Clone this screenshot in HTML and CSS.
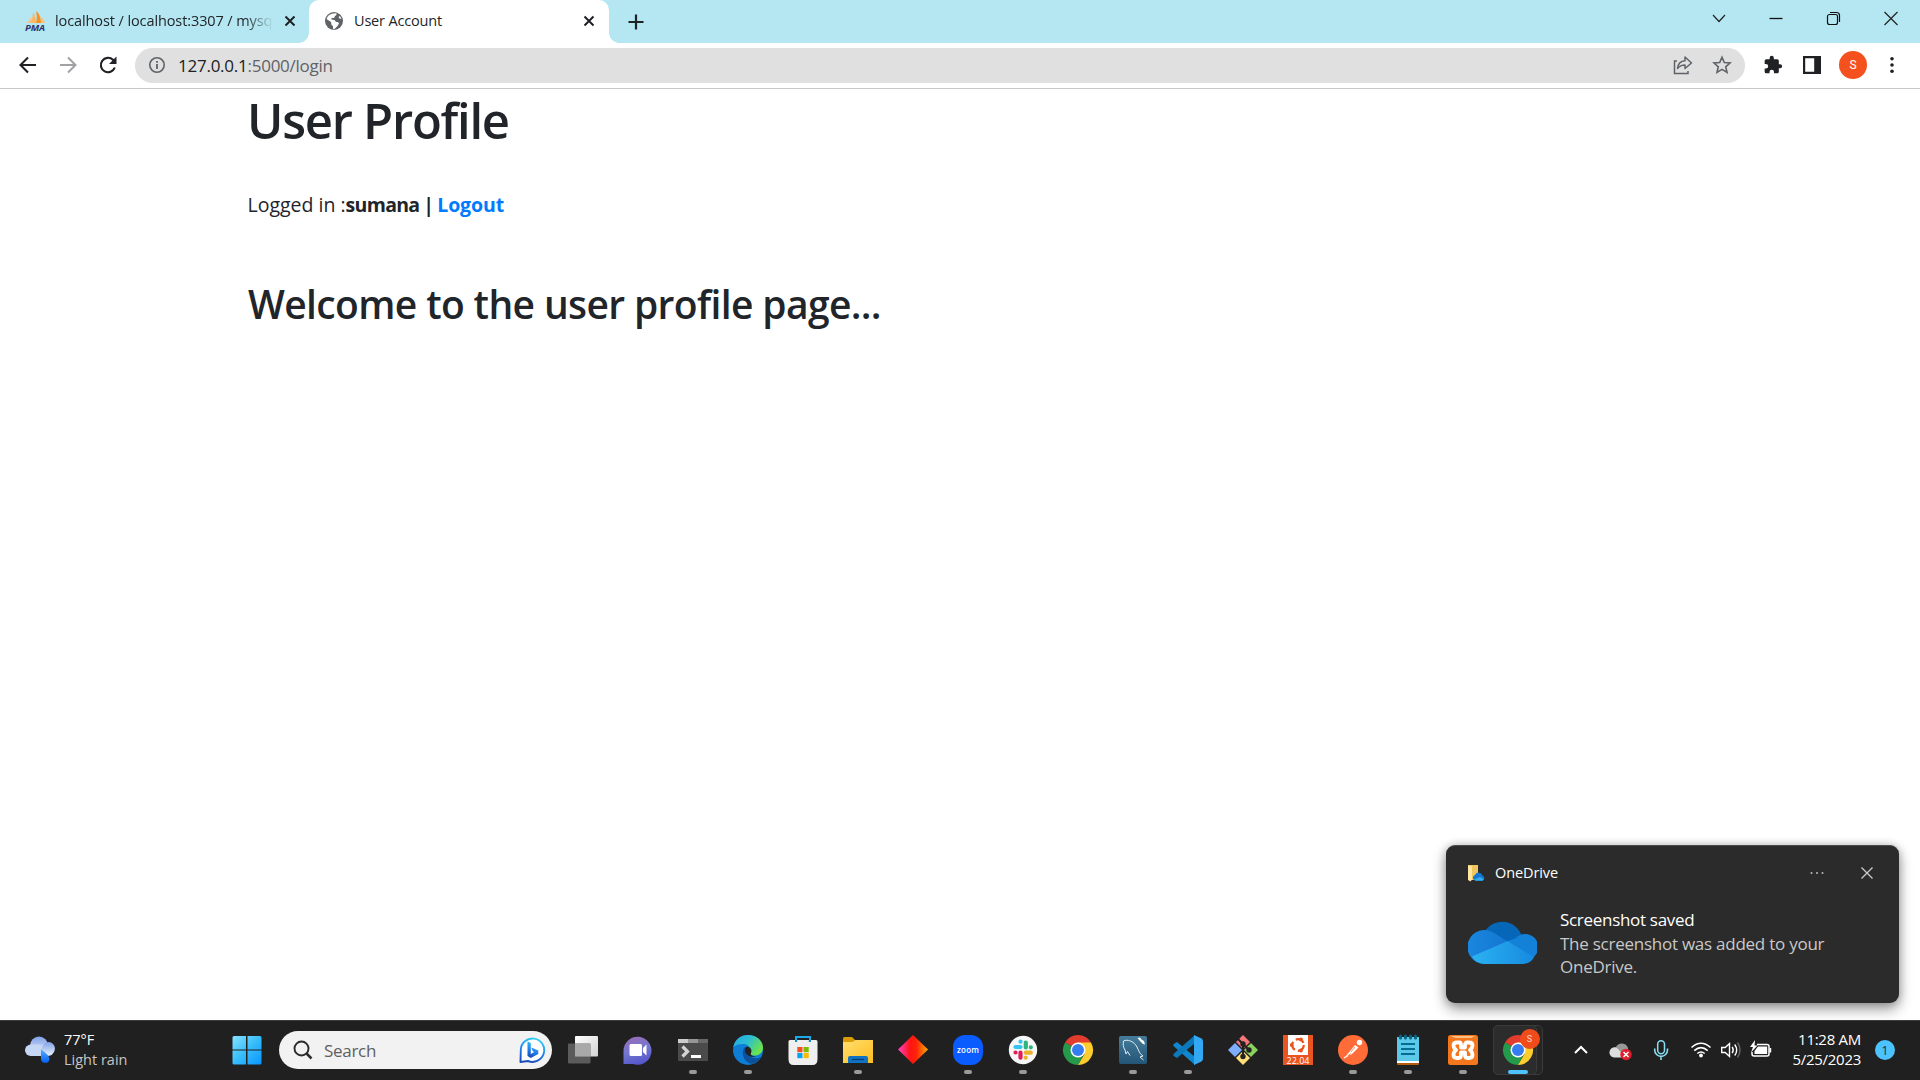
FILE: index.html
```html
<!DOCTYPE html>
<html lang="en">
<head>
<meta charset="utf-8">
<title>User Account</title>
<link rel="stylesheet" href="styles.css">
</head>
<body>
<div class="desktop">
  <header class="tabstrip">
    <div class="tab">
      <svg class="pma" width="24" height="22" viewBox="0 0 24 22"><path d="M6 13C8 10 9 6 9 2c2 3 3 7 3 11z" fill="#fbb667"/><path d="M12 13c1-4 1-8 0-12 4 3 5 8 5 12z" fill="#f8921e"/><path d="M17 13c0-3 0-5-1-7 3 2 4 4 5 7zM2 13c2-1 4-3 5-6 0 3 0 4-1 6z" fill="#fcc183"/><text x="1" y="20.500" class="pma-text" textLength="20" lengthAdjust="spacingAndGlyphs">PMA</text></svg>
      <span class="tab-title first">localhost / localhost:3307 / mysq</span>
      <svg class="close" width="12" height="12" viewBox="0 0 12 12"><path d="M1.500 1.500l9 9M10.500 1.500l-9 9" stroke="#202124" stroke-width="2"/></svg>
    </div>
    <div class="tab active">
      <svg width="20" height="20" viewBox="0 0 20 20"><circle cx="10" cy="10" r="9" fill="#5f6368"/><path d="M9 2.500l3.500-.3c0 1.500 0 2.300-1.500 2.800l-1 2H7.500v1.500l3 .5 1.500 2h2l1 1.500-1.500 2.500-3.500 3.500-1-1v-2.500l-1.500-1L7 11 2.500 8C3.500 5 5.500 3 9 2.500zM16 5l1.500 3-2-.5-1-1.500z" fill="#fff"/></svg>
      <span class="tab-title">User Account</span>
      <svg class="close" width="12" height="12" viewBox="0 0 12 12"><path d="M1.500 1.500l9 9M10.500 1.500l-9 9" stroke="#202124" stroke-width="2"/></svg>
    </div>
    <svg class="plus" width="16" height="16" viewBox="0 0 16 16"><path d="M8 .5v15M.5 8h15" stroke="#202124" stroke-width="2.200"/></svg>
    <div class="window-controls">
      <svg width="56" height="20" viewBox="0 0 56 20"><path d="M22 7l6 6.500L34 7" fill="none" stroke="#222" stroke-width="1.200"/></svg>
      <svg width="58" height="20" viewBox="0 0 58 20"><path d="M22.500 10.500h13" stroke="#111" stroke-width="1.300"/></svg>
      <svg width="57" height="20" viewBox="0 0 57 20"><rect x="22.500" y="6.500" width="10" height="10" rx="2" fill="none" stroke="#111" stroke-width="1.200"/><path d="M25 4.500h6.500q3 0 3 3V14" fill="none" stroke="#111" stroke-width="1.200"/></svg>
      <svg width="58" height="20" viewBox="0 0 58 20"><path d="M22.500 4l13 13M35.500 4l-13 13" stroke="#222" stroke-width="1.200"/></svg>
    </div>
  </header>

  <nav class="toolbar">
    <div class="nav-buttons">
      <svg width="40" height="24" viewBox="0 0 40 24"><path d="M28 12H13M20 4.500L12.500 12l7.500 7.500" fill="none" stroke="#202124" stroke-width="2.100"/></svg>
      <svg width="40" height="24" viewBox="0 0 40 24"><path d="M12 12h15M20 4.500l7.500 7.500-7.500 7.500" fill="none" stroke="#a0a1a4" stroke-width="2"/></svg>
      <svg width="40" height="24" viewBox="0 0 40 24"><path d="M26.800 14.500A7.200 7.200 0 1 1 25 6.800l1.800 2" fill="none" stroke="#202124" stroke-width="2.100"/><path d="M28.500 3.500v7.500H21z" fill="#202124"/></svg>
    </div>
    <div class="omnibox">
      <svg width="18" height="18" viewBox="0 0 18 18"><circle cx="9" cy="9" r="7.200" fill="none" stroke="#5f6368" stroke-width="1.600"/><path d="M9 8v5M9 5v1.700" stroke="#5f6368" stroke-width="1.800"/></svg>
      <span class="url"><b>127.0.0.1</b>:5000/login</span>
      <svg class="share" width="22" height="22" viewBox="0 0 22 22"><path d="M5 7H2.500v12.500H16V17" fill="none" stroke="#5f6368" stroke-width="1.500"/><path d="M5.500 14.500c.5-4.500 3-7.500 7.500-7.800V3l6.500 6-6.500 5.500V11c-3.500 0-5.500 1-7.500 3.500z" fill="none" stroke="#5f6368" stroke-width="1.500" stroke-linejoin="round"/></svg>
      <svg width="20" height="20" viewBox="0 0 20 20"><path d="M10 2.300l2.300 5.200 5.700.5-4.300 3.800 1.300 5.600-5-3-5 3 1.300-5.600L2 8l5.700-.5z" fill="none" stroke="#5f6368" stroke-width="1.600"/></svg>
    </div>
    <div class="actions">
      <svg width="20" height="20" viewBox="0 0 24 24"><path d="M20.500 11H19V7a2 2 0 0 0-2-2h-4V3.500a2.500 2.500 0 0 0-5 0V5H4a2 2 0 0 0-2 2v3.800h1.500a2.700 2.700 0 0 1 0 5.400H2V20a2 2 0 0 0 2 2h3.800v-1.500a2.700 2.700 0 0 1 5.400 0V22H17a2 2 0 0 0 2-2v-4h1.500a2.500 2.500 0 0 0 0-5z" fill="#202124"/></svg>
      <svg width="18" height="18" viewBox="0 0 18 18"><path d="M0 0h18v18H0zM2.200 2.200v13.600h9V2.200z" fill="#202124" fill-rule="evenodd"/></svg>
      <span class="avatar">S</span>
      <svg width="6" height="18" viewBox="0 0 6 18"><circle cx="3" cy="2.800" r="1.800" fill="#202124"/><circle cx="3" cy="9" r="1.800" fill="#202124"/><circle cx="3" cy="15.200" r="1.800" fill="#202124"/></svg>
    </div>
  </nav>

  <main class="page">
    <h1>User Profile</h1>
    <p class="session">Logged in :<strong>sumana | <a>Logout</a></strong></p>
    <h2>Welcome to the user profile page...</h2>
  </main>

  <footer class="taskbar">
    <div class="weather">
      <svg width="32" height="28" viewBox="0 0 32 28"><defs><linearGradient id="wc" x1="0" y1="0" x2="0" y2="1"><stop offset="0" stop-color="#7fa2e8"/><stop offset="1" stop-color="#e3ecfb"/></linearGradient><linearGradient id="wd" x1="0" y1="0" x2="0" y2="1"><stop offset="0" stop-color="#5bb0ff"/><stop offset="1" stop-color="#0560f5"/></linearGradient></defs><circle cx="15" cy="9.500" r="9" fill="url(#wc)"/><rect x="1" y="8.500" width="29" height="11.500" rx="5.700" fill="#c6d6f5"/><circle cx="24.500" cy="12.500" r="6.500" fill="url(#wc)"/><path d="M17 13c3 3 8.500 6 8.500 10.200a4.300 4.300 0 0 1-8.500 0z" fill="url(#wd)"/></svg>
      <div class="weather-text"><span>77°F</span><span class="muted">Light rain</span></div>
    </div>
    <div class="slot">
      <svg width="30" height="30" viewBox="0 0 30 30"><defs><linearGradient id="win" x1="0" y1="0" x2="1" y2="1"><stop offset="0" stop-color="#86e2ff"/><stop offset=".5" stop-color="#37bdfb"/><stop offset="1" stop-color="#0a95ff"/></linearGradient></defs><path d="M2 1h12v13.500H.5V2.500Q.5 1 2 1zM15.500 1H28q1.500 0 1.500 1.500v12h-14zM.5 15.500H14v14H2q-1.500 0-1.500-1.500zM15.500 15.500h14V28q0 1.500-1.500 1.500H15.500z" fill="url(#win)"/></svg>
    </div>
    <div class="search">
      <svg width="20" height="20" viewBox="0 0 20 20"><circle cx="8.500" cy="8.500" r="7" fill="none" stroke="#2b2b2b" stroke-width="1.900"/><path d="M13.500 13.500l5 5" stroke="#2b2b2b" stroke-width="2.500"/></svg>
      <span class="search-label">Search</span>
      <svg width="28" height="28" viewBox="0 0 28 28"><defs><linearGradient id="bing" x1=".6" y1="0" x2=".3" y2="1"><stop offset="0" stop-color="#31cdf1"/><stop offset=".5" stop-color="#2387ef"/><stop offset="1" stop-color="#1a49b8"/></linearGradient></defs><path d="M2.500 26l.3-12A11.700 11.700 0 1 1 10 25z" fill="#fff" stroke="url(#bing)" stroke-width="1.900" stroke-linejoin="round"/><path d="M9.500 5.500l3.300 1.500V18l3.500-2-1.500-.8-1.500-3.700 7 3v3.500L12.800 22l-3.300-2z" fill="url(#bing)"/></svg>
    </div>

    <div class="apps">
      <div class="slot"><svg viewBox="0 0 32 32"><defs><linearGradient id="tv" x1="0" y1="0" x2="1" y2="1"><stop offset="0" stop-color="#fff"/><stop offset="1" stop-color="#d2d2d2"/></linearGradient></defs><rect x="8" y="2" width="23" height="20.500" rx="1" fill="url(#tv)"/><rect x="1" y="9.500" width="22.500" height="20" rx="1" fill="#666" fill-opacity=".85"/><path d="M8 9.500h15.500v13H8z" fill="#a9a9a9"/></svg></div>
      <div class="slot"><svg viewBox="0 0 32 32"><defs><linearGradient id="chat" x1=".2" y1="0" x2=".5" y2="1"><stop offset="0" stop-color="#9a6cb8"/><stop offset=".5" stop-color="#7378cf"/><stop offset="1" stop-color="#5557cc"/></linearGradient></defs><path d="M1.500 30V16.500A14 14 0 1 1 11 30z" fill="url(#chat)"/><rect x="7.500" y="10" width="12.500" height="12" rx="1.500" fill="#fff"/><path d="M21 14l3.500-3.500v11L21 18z" fill="#fff"/></svg></div>
      <div class="slot running"><svg viewBox="0 0 32 32"><rect x="1" y="5" width="30" height="22" rx="1" fill="#4b4b4b"/><path d="M1 5h10v4H1z" fill="#ccc"/><path d="M11 5h10v4H11z" fill="#969696"/><path d="M21 5h10v4H21z" fill="#696969"/><path d="M5.500 12.500l5 5-5 5" fill="none" stroke="#d5d5d5" stroke-width="3.200"/><path d="M14 21h10v3H14z" fill="#fff"/></svg></div>
      <div class="slot running"><svg viewBox="0 0 32 32"><defs><linearGradient id="eg" x1="0" y1="0" x2="1" y2=".5"><stop offset="0" stop-color="#26a9e4"/><stop offset=".5" stop-color="#2bbdd4"/><stop offset="1" stop-color="#6be34b"/></linearGradient></defs><circle cx="16" cy="16" r="15" fill="#0d7dd5"/><path d="M1.300 13C3 5 9 1 16 1c9 0 15 6 15 12.500 0 5.500-4 8-8.500 8-4 0-5.500-1.500-5-3 2-3 0-8.500-6-8.500-4.500 0-8 1-10.200 3z" fill="url(#eg)"/><path d="M11.500 15C9 21 13 29 20 30c4-1 7-3.500 9-7-6 3-14 0-14.500-5.500-.2-3 2-4.500 2-4.500-2.500-.5-4 .3-5 2z" fill="#0d519c"/><path d="M15 12.800c3.500 0 5.500 3.500 4 6-1 2 1 3.500 5 3.500-6 2-11-2-11-6 0-2 1-3.500 2-3.500z" fill="#222"/></svg></div>
      <div class="slot"><svg viewBox="0 0 32 32"><path d="M9 9V3h14v6" fill="none" stroke="#1ca9ea" stroke-width="2"/><path d="M1.500 7.500Q1.500 6 3 6h26q1.500 0 1.500 1.500V25q0 6-5 6h-19q-5 0-5-6z" fill="#efefef"/><path d="M8 6h2.200v2H8zM21.800 6H24v2h-2.200z" fill="#148bc4"/><path d="M10.300 13h5.200v5.200h-5.200z" fill="#f25022"/><path d="M16.500 13h5.200v5.200h-5.200z" fill="#7fba00"/><path d="M10.300 19h5.200v5.200h-5.200z" fill="#00a4ef"/><path d="M16.500 19h5.200v5.200h-5.200z" fill="#ffb900"/></svg></div>
      <div class="slot running"><svg viewBox="0 0 32 32"><defs><linearGradient id="fol" x1="0" y1="0" x2="1" y2="1"><stop offset="0" stop-color="#ffdf70"/><stop offset="1" stop-color="#ffbd1d"/></linearGradient></defs><path d="M1 4.500Q1 3 2.500 3H10l3.500 3.500V12H1z" fill="#dd9b08"/><path d="M1 8h9.500l3-2H31v23H1z" fill="url(#fol)"/><path d="M6 29v-5q0-2 2-2h16q2 0 2 2v5z" fill="#1272c2"/><path d="M10 25.500h12" stroke="#073d76" stroke-width="1.300"/></svg></div>
      <div class="slot"><svg viewBox="0 0 32 32"><defs><linearGradient id="dia" x1="0" x2="1"><stop offset="0" stop-color="#ff43c5"/><stop offset=".4" stop-color="#ff1515"/><stop offset=".62" stop-color="#ff2407"/><stop offset="1" stop-color="#ffb000"/></linearGradient></defs><path d="M16 1l15 14.500L16 30 1 15.500z" fill="url(#dia)"/></svg></div>
      <div class="slot running"><svg viewBox="0 0 32 32"><rect x="1" y="1" width="30" height="30" rx="12" fill="#0b5cff"/><text x="16" y="18.500" class="zoom-text" textLength="22">zoom</text></svg></div>
      <div class="slot running"><svg viewBox="0 0 32 32"><circle cx="16" cy="16" r="14.200" fill="#f7f7f7"/><g fill="none" stroke-width="4.200" stroke-linecap="round"><path d="M8.500 13h5" stroke="#36c5f0"/><path d="M13.500 7.700v0" stroke="#36c5f0"/><path d="M18.800 8.500v5M23.800 13.300v0" stroke="#2eb67d"/><path d="M18.800 18.700h5M18.700 23.700v0" stroke="#ecb22e"/><path d="M13.500 18.700v5M8.500 18.500v0" stroke="#e01e5a"/></g></svg></div>
      <div class="slot"><svg viewBox="0 0 32 32"><g id="chrome"><path d="M16 16L3 8.500a15 15 0 0 1 26 0z" fill="#e33b2e"/><path d="M16 16L3 8.500A15 15 0 0 0 16 31l6-11z" fill="#249a4b"/><path d="M16 8.500h13A15 15 0 0 1 16 31l6.500-11z" fill="#fccd2d"/><circle cx="16" cy="16" r="7.500" fill="#fff"/><circle cx="16" cy="16" r="6" fill="#367df0"/></g></svg></div>
      <div class="slot running"><svg viewBox="0 0 32 32"><defs><linearGradient id="sql" x1="0" y1="0" x2="0" y2="1"><stop offset="0" stop-color="#467c9b"/><stop offset="1" stop-color="#245576"/></linearGradient></defs><rect x="2" y="2" width="28" height="28" rx="2" fill="url(#sql)"/><path d="M9 20l-1-4c-2-3-2-6-1.500-9C10 5 17 7 20 13c2 4 2.500 7 6 9l-3 1 3.500 3M9 20l1.500-2.500 2.500 4" fill="none" stroke="#e2edf3" stroke-width="1"/><path d="M20.500 4l2.500-.5 1.500 2 2.500 1.500 1 3.500-2-.5-3.500-3.500z" fill="#fff"/></svg></div>
      <div class="slot running"><svg viewBox="0 0 32 32"><path d="M2.500 9.500L5 8l18 15v8L1.500 12q-1-1.500 1-2.500z" fill="#1186ce"/><path d="M2.500 22.500L5 24 23 9V1L1.500 20q-1 1.500 1 2.500z" fill="#0c79bd"/><path d="M22 1l7 3.200q2 1 2 3v17.600q0 2-2 3L22 31z" fill="#32a8f3"/></svg></div>
      <div class="slot"><svg viewBox="0 0 32 32"><path d="M16 1l7 7-7 7-7-7z" fill="#f5777b"/><path d="M8 9l7 7-7 7-7-7z" fill="#80aeff"/><path d="M24 9l7 7-7 7-7-7z" fill="#8bd35c"/><path d="M16 17l7 7-7 7-7-7z" fill="#ffe078"/><path d="M11 5l5 5v12M16 10l6 6" fill="none" stroke="#222" stroke-width="2"/><g fill="#222"><circle cx="16" cy="10" r="2.700"/><circle cx="22" cy="16" r="2.700"/><circle cx="16" cy="22.500" r="2.700"/></g></svg></div>
      <div class="slot"><svg viewBox="0 0 32 32"><path d="M1 1h30v30H1z" fill="#e95420"/><path d="M6 1h20v20H6z" fill="#fff"/><circle cx="16" cy="11" r="5.800" fill="none" stroke="#e95420" stroke-width="2.200" stroke-dasharray="9 3.150"/><g fill="#e95420"><circle cx="9.700" cy="11" r="1.900"/><circle cx="19" cy="5.500" r="1.900"/><circle cx="19" cy="16.500" r="1.900"/></g><text x="16" y="29.800" class="ubuntu-text" textLength="23">22.04</text></svg></div>
      <div class="slot running"><svg viewBox="0 0 32 32"><circle cx="16" cy="16" r="15" fill="#ff6c37"/><circle cx="22.500" cy="8.500" r="2.700" fill="#fff"/><path d="M9 22l9-11 3.500 2.500-7 7z" fill="#fff"/><path d="M7 24.500l7-5M18 13l-4 5" stroke="#ff6c37" stroke-width=".8"/><path d="M7 24l4-2.500" stroke="#fff" stroke-width="1.300"/></svg></div>
      <div class="slot running"><svg viewBox="0 0 32 32"><path d="M5 27h22v3q0 1-1 1H6q-1 0-1-1z" fill="#b75b10"/><path d="M5 4q0-1 1-1h20q1 0 1 1v25H5z" fill="#fff"/><path d="M5 4q0-1 1-1h20q1 0 1 1v23H5z" fill="#5dc9e8"/><path d="M9 10h14M9 15h14M9 20h14" stroke="#066c94" stroke-width="1.800"/><path d="M8.500 2v2M13.500 2v2M18.500 2v2M23.500 2v2" stroke="#086482" stroke-width="3" stroke-linecap="round"/></svg></div>
      <div class="slot running"><svg viewBox="0 0 32 32"><rect x="1" y="1" width="30" height="30" rx="2.500" fill="#f4761d"/><path d="M4 2h24l-4 2H8z" fill="#ffc084"/><path d="M12.500 8.500H10q-3.500 0-3.500 3 0 2.500 2.500 4.500-2.500 2-2.500 5 0 3 3.500 3h1.500q2.500 0 2.500-3v-2.500h4V21q0 3 2.500 3H22q3.500 0 3.500-3 0-3-2.500-5 2.500-2 2.500-4.500 0-3-3.500-3h-1.500q-2.500 0-2.500 3v2h-4v-2q0-3-1.500-3z" fill="none" stroke="#fff" stroke-width="3.800" stroke-linejoin="round"/></svg></div>
      <div class="slot current"><span class="stack"></span><span class="tile"></span><svg viewBox="0 0 32 32"><use href="#chrome"/></svg><span class="profile">S</span></div>
    </div>

    <div class="tray">
      <svg width="40" height="24" viewBox="0 0 40 24"><path d="M14 15l6-6 6 6" fill="none" stroke="#fff" stroke-width="2"/></svg>
      <svg width="40" height="24" viewBox="0 0 40 24"><path d="M13 19a5 5 0 0 1-2-9c2-1 3-1 4-1a6.500 6.500 0 0 1 12 1v9z" fill="#989898"/><path d="M13 19.500a5 5 0 1 1 4-8.500l8 8.500z" fill="#ddd"/><circle cx="25" cy="16.500" r="5.700" fill="#df1f2d"/><path d="M22.500 14l5 5M27.500 14l-5 5" stroke="#fff" stroke-width="1.500"/></svg>
      <svg width="40" height="24" viewBox="0 0 40 24"><rect x="16.700" y="2.700" width="6.800" height="13" rx="3.400" fill="none" stroke="#87dff2" stroke-width="1.500"/><path d="M13.700 10.500v1.500a6.400 6.400 0 0 0 12.800 0v-1.500M20 18.500V22" fill="none" stroke="#87dff2" stroke-width="1.600"/></svg>
      <svg class="wifi" width="30" height="24" viewBox="0 0 30 24"><path d="M5.500 9.500q9.500-8.500 19 0M8.300 12.600q6.700-6 13.400 0M11.300 15.500q3.700-3 7.400 0" fill="none" stroke="#fff" stroke-width="1.600"/><circle cx="15" cy="17.500" r="1.900" fill="#fff"/></svg>
      <svg width="30" height="24" viewBox="0 0 30 24"><path d="M5.700 9.500h3.500l4.300-4v13l-4.300-4H5.700z" fill="none" stroke="#fff" stroke-width="1.400"/><path d="M16.200 8.800q2 3.200 0 6.400M18.700 6.500q4 5.500 0 11" fill="none" stroke="#fff" stroke-width="1.400"/><path d="M21.500 4.500q5 7.500 0 15" fill="none" stroke="#666" stroke-width="1.400"/></svg>
      <svg width="30" height="24" viewBox="0 0 30 24"><path d="M11 6.500h10q2 0 2 2v7.500q0 2-2 2H8q-2 0-2-2V14" fill="none" stroke="#fff" stroke-width="1.500"/><path d="M12 8.500h9.200v7.500H8.500V13zM23.500 10h1.700v4.500h-1.700zM9 2l-5 7h3l-2 5.500 6.500-7H8.500z" fill="#fff"/></svg>
      <div class="clock"><span>11:28 AM</span><span>5/25/2023</span></div>
      <span class="badge">1</span>
    </div>
  </footer>

  <aside class="toast">
    <div class="toast-head">
      <svg width="17" height="18" viewBox="0 0 17 18"><path d="M0 1h10v15H0z" fill="#f0c75c"/><path d="M0 1.500l4 1v13L2.500 17.500 0 16z" fill="#ffe6a1"/><path d="M7.500 16.500a2.800 2.800 0 0 1-.5-5.500 4 4 0 0 1 7.500.5 2.600 2.600 0 0 1 0 5z" fill="#1378d3"/><path d="M6 15.500l6-2.500 4 2.500-1.500 1.300H7.500z" fill="#31adf0"/></svg>
      <span class="app-name">OneDrive</span>
      <svg width="14" height="4" viewBox="0 0 14 4"><g fill="#bbb"><circle cx="1.500" cy="2" r="1"/><circle cx="7" cy="2" r="1"/><circle cx="12.500" cy="2" r="1"/></g></svg>
      <svg class="dismiss" width="12" height="12" viewBox="0 0 12 12"><path d="M.5.500l11 11M11.500.500l-11 11" stroke="#ccc" stroke-width="1.300"/></svg>
    </div>
    <div class="toast-body">
      <svg class="cloud" width="69" height="45" viewBox="0 0 71 46"><defs><linearGradient id="oda" x1="0" x2="1"><stop offset="0" stop-color="#1b87de"/><stop offset="1" stop-color="#0d6cc9"/></linearGradient><linearGradient id="odb" x1="0" x2="1"><stop offset="0" stop-color="#2bb2f1"/><stop offset="1" stop-color="#168ae0"/></linearGradient></defs><path d="M17 12a21 21 0 0 1 39 8L42 24z" fill="#0667b8"/><path d="M15 45A17.500 17.500 0 1 1 27 13.300L66 38z" fill="url(#oda)"/><path d="M41 21.500l8-3a13.500 13.500 0 1 1 18 20z" fill="#1481d9"/><path d="M4 37.500l37-16 27 16.500a13 13 0 0 1-12 7H17Q8 45 4 37.500z" fill="url(#odb)"/></svg>
      <div class="toast-text"><span class="toast-title">Screenshot saved</span><span>The screenshot was added to your</span><span>OneDrive.</span></div>
    </div>
  </aside>
</div>
</body>
</html>
```
FILE: styles.css
```css
* { box-sizing: border-box; }
body { margin: 0; background: #fff; font-family: "Open Sans", "Noto Sans", sans-serif; color: #212529; overflow: hidden; }
svg { display: block; flex: none; }
.desktop { position: relative; width: 1920px; height: 1080px; display: grid; grid-template-rows: 43px 46px 1fr 60px; }

.tabstrip { display: flex; align-items: stretch; background: #b4e7f2; }
.tab { display: flex; align-items: center; width: 309px; padding: 0 13px 2px 24px; font-size: 14.500px; letter-spacing: -.1px; }
.tab.active { position: relative; width: 300px; padding: 0 14px 2px 15px; background: #fff; border-radius: 10px 10px 0 0; letter-spacing: -.18px; }
.tab.active::before, .tab.active::after { content: ""; position: absolute; bottom: 0; width: 10px; height: 10px; }
.tab.active::before { left: -10px; background: radial-gradient(circle at 0 0, transparent 9.500px, #fff 10px); }
.tab.active::after { right: -10px; background: radial-gradient(circle at 100% 0, transparent 9.500px, #fff 10px); }
.tab-title { flex: 1; margin-left: 10px; white-space: nowrap; }
.tab-title.first { flex: none; width: 220px; margin-left: 7px; -webkit-mask-image: linear-gradient(90deg, #000 190px, transparent 218px); mask-image: linear-gradient(90deg, #000 190px, transparent 218px); }
.tab .close { margin-left: auto; }
.pma-text { font: italic 700 9px "Open Sans", sans-serif; fill: #33336b; }
.plus { align-self: center; margin-left: 19px; }
.window-controls { display: flex; align-items: center; margin-left: auto; height: 36px; }

.toolbar { display: flex; align-items: center; padding: 0 0 1px 7.500px; border-bottom: 1px solid #c9c9c9; background: #fff; }
.nav-buttons { display: flex; width: 127.500px; }
.omnibox { display: flex; align-items: center; width: 1610px; height: 35px; padding: 0 13px; border-radius: 18px; background: #e0e0e0; }
.url { margin-left: 12px; font-size: 17px; letter-spacing: -.25px; color: #5f6368; }
.url b { font-weight: 400; color: #202124; }
.share { margin: 0 18px 0 auto; }
.actions { display: flex; align-items: center; margin-left: 18px; }
.actions > * { margin-right: 20px; }
.actions .avatar { display: grid; place-items: center; width: 28px; height: 28px; margin: 0 22px 0 -2px; border-radius: 50%; background: #f4511e; color: #fff; font: 12px Roboto, sans-serif; }

.page { padding: 0 248px; }
h1, h2 { margin: 0; font-weight: 600; white-space: nowrap; }
h1 { height: 60px; margin: 1px 0 0 -1px; font-size: 49px; line-height: 60px; letter-spacing: -1.250px; }
.session { margin: 40px 0 0 -.5px; font-size: 19.500px; line-height: 30px; white-space: nowrap; }
.session strong { letter-spacing: -.700px; word-spacing: -.5px; }
.session a { color: #007bff; letter-spacing: -.1px; }
h2 { margin-top: 60px; font-size: 39px; line-height: 48px; letter-spacing: -.630px; }

.taskbar { display: flex; align-items: center; background: #202020; box-shadow: inset 0 1px #3a3d3e; color: #fff; }
.weather { display: flex; align-items: center; width: 219px; padding-left: 24px; }
.weather-text, .clock, .toast-text { display: flex; flex-direction: column; }
.weather-text { margin: -1px 0 0 8px; font-size: 14.500px; line-height: 20px; }
.muted { color: #c5c5c5; }
.slot { position: relative; display: grid; place-items: center; width: 55px; height: 60px; }
.search { display: flex; align-items: center; width: 273px; height: 38px; margin: 0 3.500px 0 5px; padding: 0 6px 0 14px; border-radius: 19px; background: #f2f2f2; }
.search-label { margin: 0 auto 0 11px; font-size: 17px; color: #606060; letter-spacing: -.3px; }
.apps { display: flex; }
.apps svg { width: 32px; height: 32px; position: relative; }
.running::after { content: ""; position: absolute; bottom: 6px; left: 23.500px; width: 8px; height: 4px; border-radius: 2px; background: #9a9a9a; }
.current::after { content: ""; position: absolute; bottom: 6px; left: 17.500px; width: 20px; height: 4px; border-radius: 2px; background: #4cc2ff; }
.tile, .stack { position: absolute; top: 5px; left: 2.500px; height: 50px; border: 1px solid #3b3b3b; border-radius: 5px; background: #2c2c2c; }
.tile { width: 44px; }
.stack { width: 50px; background: #262626; }
.profile { position: absolute; top: 9px; left: 29px; display: grid; place-items: center; width: 20px; height: 20px; border-radius: 50%; background: #f04b1b; color: #ffd5c8; font: 9px Roboto, sans-serif; }
.zoom-text { font: 600 8px "Open Sans", sans-serif; fill: #fff; text-anchor: middle; }
.ubuntu-text { font: 9px "Open Sans", sans-serif; fill: #fff; text-anchor: middle; }

.tray { display: flex; align-items: center; margin-left: 15.500px; }
.wifi { margin-left: 5px; }
.clock { width: 85px; margin-top: -2px; text-align: right; font-size: 15px; line-height: 20px; letter-spacing: -.28px; }
.badge { display: grid; place-items: center; width: 20px; height: 20px; margin-left: 14px; border-radius: 50%; background: #4cc2ff; color: #16303f; font-size: 12px; }

.toast { position: absolute; left: 1446px; top: 845px; width: 453px; height: 158px; padding: 18px 26px 0 22px; border-radius: 9px; border-top: 1px solid #4a4d4b; background: #2b2b2b; color: #fff; box-shadow: 0 6px 14px rgba(0,0,0,.4), 0 0 8px rgba(0,0,0,.2); clip-path: inset(-30px -21px -17px -30px); }
.toast-head { display: flex; align-items: center; height: 18px; }
.app-name { margin: -1px auto 0 10px; font-size: 14.500px; letter-spacing: -.1px; }
.dismiss { margin-left: 37px; }
.toast-body { display: flex; align-items: center; margin-top: 26px; }
.cloud { margin-top: -2px; }
.toast-text { margin-left: 23px; font-size: 17px; line-height: 23.500px; letter-spacing: -.25px; color: #c8c8c8; white-space: nowrap; }
.toast-title { color: #fff; letter-spacing: -.3px; }
```
